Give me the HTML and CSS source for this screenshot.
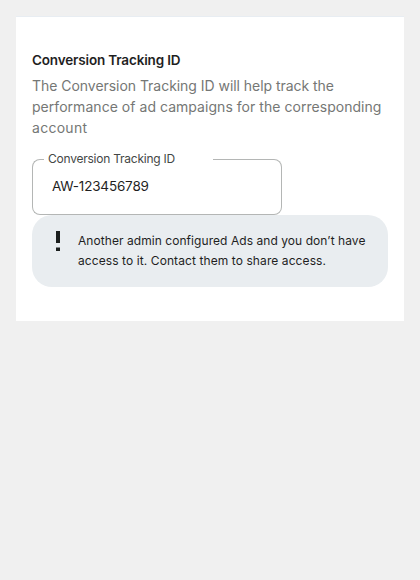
FILE: index.html
```html
<!DOCTYPE html>
<html lang="en">
<head>
<meta charset="utf-8">
<title>Conversion Tracking ID</title>
<link rel="stylesheet" href="styles.css">
</head>
<body>
<section class="card">
  <h2 class="title"><span>Conversion Tracking ID</span></h2>
  <p class="description"><span class="d1">The Conversion Tracking ID will help track the</span><br><span class="d2">performance of ad campaigns for the corresponding</span><br><span class="d3">account</span></p>
  <div class="field">
    <div class="outline">
      <span class="outline-start"></span>
      <span class="notch"><span class="label">Conversion Tracking ID</span></span>
      <span class="outline-end"></span>
    </div>
    <div class="value"><span>AW-123456789</span></div>
  </div>
  <div class="notice">
    <svg class="icon" width="20" height="20" viewBox="0 0 20 20"><path d="M8 0h4v12H8zM8 16.5h4V20H8z" fill="#1b1f1e"/></svg>
    <p class="message"><span class="m1">Another admin configured Ads and you don’t have</span><br><span class="m2">access to it. Contact them to share access.</span></p>
  </div>
</section>
</body>
</html>
```
FILE: styles.css
```css
* { box-sizing: border-box; }
body {
  margin: 0;
  padding: 16px;
  background: #f0f0f0;
  color: #1f1f1f;
  font-family: Inter, "Liberation Sans", sans-serif;
}
.card {
  height: 305px;
  padding: 33px 16px 0;
  background: #fff;
  border-top: 1px solid #e8edf2;
}
.title {
  margin: 0;
  font-size: 13.5px;
  line-height: 20px;
  font-weight: 600;
  letter-spacing: -0.16px;
}
.description {
  margin: 5px 0 0;
  color: #757775;
  font-size: 14px;
  line-height: 21px;
  white-space: nowrap;
}
.d1 { letter-spacing: -0.04px; }
.d2 { letter-spacing: 0.04px; }
.d3 { letter-spacing: 0.28px; }
.field {
  display: grid;
  width: 250px;
  height: 56px;
  margin-top: 21px;
}
.outline, .value { grid-area: 1 / 1; }
.outline { display: flex; }
.outline-start {
  width: 12px;
  border: 1px solid #b4b6b5;
  border-right: 0;
  border-radius: 8px 0 0 8px;
}
.notch {
  width: 169px;
  padding-left: 4px;
  border-bottom: 1px solid #b4b6b5;
}
.label {
  display: block;
  margin-top: -8px;
  color: #444746;
  font-size: 12px;
  line-height: 16px;
  letter-spacing: -0.24px;
  white-space: nowrap;
}
.outline-end {
  flex: 1;
  border: 1px solid #b4b6b5;
  border-left: 0;
  border-radius: 0 8px 8px 0;
}
.value {
  padding: 17px 20px;
  font-size: 13.5px;
  line-height: 20px;
  letter-spacing: -0.18px;
}
.notice {
  display: flex;
  gap: 10px;
  height: 72px;
  padding: 16px;
  background: #e9edf0;
  border-radius: 20px;
}
.icon { flex: none; }
.message {
  margin: 0;
  font-size: 12px;
  line-height: 20px;
  white-space: nowrap;
}
.m1 { letter-spacing: 0.06px; }
.m2 { letter-spacing: 0.09px; }
```
